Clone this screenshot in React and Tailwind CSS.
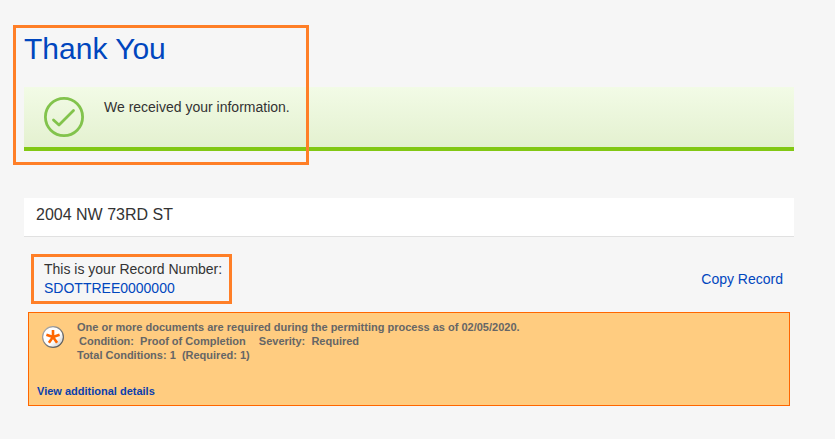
function SuccessIcon() {
    return (
        <svg className="w-10 h-10 shrink-0" viewBox="0 0 40 40" fill="none" stroke="#82c34c" aria-hidden="true">
            <circle cx="20" cy="20" r="18.6" strokeWidth="2.8" />
            <path d="M9.5 23 L15 28 L29.5 13.5" strokeWidth="2.8" strokeLinecap="round" strokeLinejoin="round" />
        </svg>
    );
}

function RequiredIcon() {
    return (
        <svg className="w-6 h-6 shrink-0" viewBox="0 0 24 24" aria-hidden="true">
            <defs>
                <linearGradient id="badge" x1="0" y1="0" x2="1" y2="1">
                    <stop offset="0.6" stopColor="#ffffff" />
                    <stop offset="1" stopColor="#b8b8b8" />
                </linearGradient>
                <linearGradient id="rim" x1="0" y1="0" x2="1" y2="1">
                    <stop offset="0" stopColor="#b5b5b5" />
                    <stop offset="1" stopColor="#4a4a4a" />
                </linearGradient>
            </defs>
            <circle cx="12" cy="12" r="10.4" fill="url(#badge)" stroke="url(#rim)" strokeWidth="1.2" />
            <path
                d="M12 12 V5 M12 12 L5.4 9.8 M12 12 L18.6 9.8 M12 12 L7.9 17.8 M12 12 L16.1 17.8"
                stroke="#ff6600"
                strokeWidth="2.6"
            />
        </svg>
    );
}

function SuccessBanner({ title, message }) {
    return (
        <section className="relative">
            <h1 className="text-3xl leading-10 text-[#0046be]">{title}</h1>
            <div
                role="status"
                className="mt-[18px] flex items-start gap-5 px-5 py-[10px] border-b-4 border-[#82c814] bg-linear-to-b from-[#f2fbe6] to-[#e4f1d0]"
            >
                <SuccessIcon />
                <p className="text-sm leading-5">{message}</p>
            </div>
            <div className="absolute -top-1 -bottom-[14px] -left-[11px] w-[296px] border-3 border-[#ff7f27] pointer-events-none" />
        </section>
    );
}

function ConditionNotice() {
    return (
        <section className="mt-2 mx-1 px-2 py-[7px] border border-[#ff6600] bg-[#ffcc80] text-[11px] leading-[14px] font-bold text-[#666666]">
            <div className="flex items-start gap-3 pl-1">
                <div className="pt-[5px]">
                    <RequiredIcon />
                </div>
                <div>
                    <p>One or more documents are required during the permitting process as of 02/05/2020.</p>
                    <p className="pl-[2px] flex flex-wrap gap-x-[13px]">
                        <span>Condition:&nbsp; Proof of Completion</span>
                        <span>Severity:&nbsp; Required</span>
                    </p>
                    <p>Total Conditions: 1&nbsp; (Required: 1)</p>
                </div>
            </div>
            <a href="#details" className="mt-[22px] inline-block text-[#0a3fae]">
                View additional details
            </a>
        </section>
    );
}

export default function App() {
    return (
        <main className="min-h-screen bg-[#f6f6f6] pt-[29px] pb-8 pl-6 pr-[41px] font-['Liberation_Sans',Arial,sans-serif] text-[#333333]">
            <SuccessBanner title="Thank You" message="We received your information." />

            <h2 className="mt-[47px] px-3 pt-[5px] pb-[9px] text-base border-b border-[#e1e1e1] bg-white">2004 NW 73RD ST</h2>

            <div className="mt-[17px] pl-[7px] pr-[11px] flex items-center justify-between">
                <div className="border-3 border-[#ff7f27] py-[3px] pl-[10px] pr-[7px] text-sm leading-[19px]">
                    <p>This is your Record Number:</p>
                    <a href="#record" className="block text-[#0046be]">
                        SDOTTREE0000000
                    </a>
                </div>
                <a href="#copy" className="text-sm text-[#0046be]">
                    Copy Record
                </a>
            </div>

            <ConditionNotice />
        </main>
    );
}
